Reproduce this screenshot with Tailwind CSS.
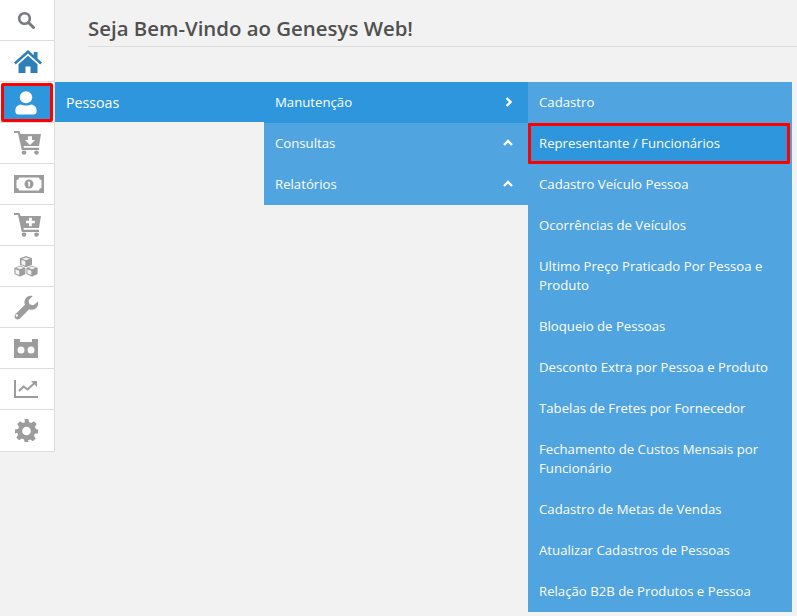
<!DOCTYPE html>
<html lang="en">
<head>
<meta charset="UTF-8">
<title>Genesys Web</title>
<script src="https://cdn.jsdelivr.net/npm/@tailwindcss/browser@4"></script>
</head>
<body class="bg-[#f2f2f2] font-['Open_Sans',sans-serif] text-[13.2px] leading-[19px] text-white overflow-hidden h-[616px]">
<div class="flex items-start">
  <!-- Sidebar -->
  <div class="w-[55px] shrink-0 bg-white border-r border-b border-[#dddddd]">
    <div class="h-[41px] border-b border-[#dddddd] flex items-center pl-[17px]">
      <svg class="w-[18px] h-[18px]" viewBox="0 0 18 18" fill="none" stroke="#777b80" stroke-width="2.6"><circle cx="7.5" cy="7.5" r="5.3"/><path d="M11.5 11.5L16.5 16.5" stroke-linecap="round" stroke-width="3"/></svg>
    </div>
    <div class="h-[41px] border-b border-[#dddddd] flex items-center pl-[14px]">
      <svg class="w-[28px] h-[23px]" viewBox="0 0 28 23" fill="#2e7fb8"><path d="M14 0L0 12.500l1.700 1.900L14 3.500l12.300 10.900 1.700-1.900-4.500-4V2h-3.700v3.200z"/><path d="M14 5.800L4.500 14.300V23h7v-6.500h5V23h7v-8.700z"/></svg>
    </div>
    <div class="h-[41px] border-b border-[#dddddd] pt-[1px] pl-[1px]">
      <div class="w-[52px] h-[39px] bg-[#2e96dc] border-[3px] border-[#ff0000] rounded-[2px] flex items-center pl-[11px]">
        <svg class="w-[22px] h-[24px]" viewBox="0 0 23 26" preserveAspectRatio="none" fill="#ffffff"><circle cx="11.5" cy="6.8" r="6.5"/><path d="M6 14.500c3 1.600 8 1.600 11 0 3.400.4 5.600 3 5.600 6.500v1.500c0 1.700-1.300 3-3 3H3.400c-1.700 0-3-1.300-3-3V21c0-3.500 2.200-6.100 5.600-6.500z"/></svg>
      </div>
    </div>
    <div class="h-[41px] border-b border-[#dddddd] flex items-center pl-[14px]">
      <svg class="w-[27px] h-[24px]" viewBox="0 0 27 25" preserveAspectRatio="none"><path fill="#9c9c9c" fill-rule="evenodd" d="M0 0h5.500l1 3H27l-2 12.500H9.500l.4 2H25v2.300H7.800L4 2.200H0zM14 5.500v4h-3l5 5 5-5h-3v-4z"/><circle cx="10" cy="22.500" r="2.300" fill="#9c9c9c"/><circle cx="22.500" cy="22.500" r="2.300" fill="#9c9c9c"/></svg>
    </div>
    <div class="h-[41px] border-b border-[#dddddd] flex items-center pl-[14px]">
      <svg class="w-[30px] h-[18px]" viewBox="0 0 30 18"><path fill="#9c9c9c" fill-rule="evenodd" d="M0 0h30v18H0zM5 2.500C5 4 4 5 2.500 5v8C4 13 5 14 5 15.500h20c0-1.500 1-2.500 2.500-2.500V5C26 5 25 4 25 2.500z"/><circle cx="15" cy="9" r="4.500" fill="#9c9c9c"/><path fill="#fff" d="M14 6.800h2v4.600h-1.600V8.300H14z"/></svg>
    </div>
    <div class="h-[41px] border-b border-[#dddddd] flex items-center pl-[14px]">
      <svg class="w-[27px] h-[24px]" viewBox="0 0 27 25" preserveAspectRatio="none"><path fill="#9c9c9c" fill-rule="evenodd" d="M0 0h5.500l1 3H27l-2 12.500H9.500l.4 2H25v2.300H7.800L4 2.200H0zM15 5v3h-3v2.800h3v3h2.800v-3h3V8h-3V5z"/><circle cx="10" cy="22.500" r="2.300" fill="#9c9c9c"/><circle cx="22.500" cy="22.500" r="2.300" fill="#9c9c9c"/></svg>
    </div>
    <div class="h-[41px] border-b border-[#dddddd] flex items-center pl-[14px]">
      <svg class="w-[24px] h-[21px]" viewBox="0 0 24 22" preserveAspectRatio="none"><path fill="#9c9c9c" d="M12 0l6 2.300v7L12 12 6 9.300v-7z"/><path fill="#f4f4f4" d="M12 1.500l3.800 1.400L12 4.400 8.200 2.900zM7.500 4l3.800 1.500v4.800L7.500 8.600z"/><path fill="#9c9c9c" stroke="#fff" stroke-width=".8" d="M6 9.700l6 2.500v7L6 22l-6-2.800v-7z"/><path fill="#9c9c9c" stroke="#fff" stroke-width=".8" d="M18 9.700l6 2.500v7L18 22l-6-2.800v-7z"/><path fill="#f4f4f4" d="M6 11l3.800 1.400L6 13.900l-3.800-1.500zM18 11l3.800 1.400L18 13.900l-3.800-1.500zM1.500 14l3.800 1.500v4.500l-3.800-1.700zM13.500 14l3.800 1.500v4.500l-3.800-1.700z"/></svg>
    </div>
    <div class="h-[41px] border-b border-[#dddddd] flex items-center pl-[14px]">
      <svg class="w-[25px] h-[25px]" viewBox="0 0 25 25"><path fill="#9c9c9c" fill-rule="evenodd" d="M24 6.500c.8 3-.4 6-3 7.500-1.800 1-3.900 1.100-5.800.3L6 23.500c-1.400 1.300-3.400 1.200-4.600 0-1.200-1.300-1.100-3.200.2-4.500l9.300-9.200c-.7-1.900-.6-4 .4-5.800C12.800 1.400 15.800.2 18.800 1l-4.300 4.300.9 4 4 .9zM4 20.500a1.200 1.200 0 1 0 0 .1z"/></svg>
    </div>
    <div class="h-[41px] border-b border-[#dddddd] flex items-center pl-[14px]">
      <svg class="w-[24px] h-[19px]" viewBox="0 0 24 19"><path fill="#9c9c9c" fill-rule="evenodd" d="M0 0h6v3h12V0h6v19H0zM7 7.500a3.500 3.500 0 1 0 0 7 3.500 3.500 0 0 0 0-7zm10 0a3.500 3.500 0 1 0 0 7 3.500 3.500 0 0 0 0-7z"/></svg>
    </div>
    <div class="h-[41px] border-b border-[#dddddd] flex items-center pl-[14px]">
      <svg class="w-[24px] h-[18px]" viewBox="0 0 24 18"><path fill="#9c9c9c" d="M0 0h2v16h22v2H0z"/><path fill="none" stroke="#9c9c9c" stroke-width="2" d="M5 11l4.500-4.500 4 3L20 3.500"/><path fill="#9c9c9c" d="M17 1h6v6z"/></svg>
    </div>
    <div class="h-[41px] flex items-center pl-[15px]">
      <svg class="w-[23px] h-[24px]" viewBox="0 0 24 24"><path fill="#9c9c9c" fill-rule="evenodd" d="M10 0h4l.7 3.300 2.200.9 2.800-1.800 2.900 2.900-1.800 2.800.9 2.200L24 11v4l-3.300.2-.9 2.200 1.800 2.800-2.900 2.900-2.800-1.800-2.200.9L14 24h-4l-.7-2.800-2.200-.9-2.800 1.800-2.900-2.900 1.800-2.800-.9-2.200L0 15v-4l3.300-.7.900-2.200L2.400 5.300l2.900-2.900 2.800 1.800 2.200-.9zM12 8a4.500 4.500 0 1 0 0 9 4.500 4.500 0 0 0 0-9z" transform="translate(0 -.5)"/></svg>
    </div>
  </div>

  <!-- Main -->
  <div class="flex-1 min-w-0">
    <div class="h-[82px] pl-[33px]">
      <h1 class="h-[47px] pt-[14px] border-b border-[#dddddd] text-[20.4px] leading-[28px] font-semibold text-[#505050]">Seja Bem-Vindo ao Genesys Web!</h1>
    </div>
    <div class="flex items-start">
      <div class="w-[209px] shrink-0 bg-[#2e96dc]">
        <div class="h-[40px] pl-[11px] flex items-center text-[14.2px]">Pessoas</div>
      </div>
      <div class="w-[264px] shrink-0 bg-[#50a4e0]">
        <div class="h-[41px] px-[11px] pb-[1px] flex items-center justify-between bg-[#2e96dc]">
          <span>Manutenção</span>
          <svg class="w-[9px] h-[10px] mr-[4px]" viewBox="0 0 9 10" fill="none" stroke="#fff" stroke-width="2.400"><path d="M2.500 1l4 4-4 4"/></svg>
        </div>
        <div class="h-[41px] px-[11px] pb-[1px] flex items-center justify-between">
          <span>Consultas</span>
          <svg class="w-[10px] h-[8px] mr-[4px]" viewBox="0 0 10 8" fill="none" stroke="#fff" stroke-width="2.400"><path d="M1 6l4-4 4 4"/></svg>
        </div>
        <div class="h-[41px] px-[11px] pb-[1px] flex items-center justify-between">
          <span>Relatórios</span>
          <svg class="w-[10px] h-[8px] mr-[4px]" viewBox="0 0 10 8" fill="none" stroke="#fff" stroke-width="2.400"><path d="M1 6l4-4 4 4"/></svg>
        </div>
      </div>
      <div class="w-[264px] shrink-0 bg-[#50a4e0]">
        <div class="px-[11px] pt-[10.5px] pb-[11.5px]">Cadastro</div>
        <div class="px-[11px] pt-[10.5px] pb-[11.5px] relative">
          <div class="absolute inset-y-0 left-0 right-[2px] bg-[#2e96dc] border-[3px] border-[#ff0000] rounded-[1px]"></div>
          <span class="relative">Representante / Funcionários</span>
        </div>
        <div class="px-[11px] pt-[10.5px] pb-[11.5px]">Cadastro Veículo Pessoa</div>
        <div class="px-[11px] pt-[10.5px] pb-[11.5px]">Ocorrências de Veículos</div>
        <div class="px-[11px] pt-[10.5px] pb-[11.5px]">Ultimo Preço Praticado Por Pessoa e Produto</div>
        <div class="px-[11px] pt-[10.5px] pb-[11.5px]">Bloqueio de Pessoas</div>
        <div class="px-[11px] pt-[10.5px] pb-[11.5px]">Desconto Extra por Pessoa e Produto</div>
        <div class="px-[11px] pt-[10.5px] pb-[11.5px]">Tabelas de Fretes por Fornecedor</div>
        <div class="px-[11px] pt-[10.5px] pb-[11.5px]">Fechamento de Custos Mensais por Funcionário</div>
        <div class="px-[11px] pt-[10.5px] pb-[11.5px]">Cadastro de Metas de Vendas</div>
        <div class="px-[11px] pt-[10.5px] pb-[11.5px]">Atualizar Cadastros de Pessoas</div>
        <div class="px-[11px] pt-[10.5px] pb-[11.5px]">Relação B2B de Produtos e Pessoa</div>
      </div>
    </div>
  </div>
</div>
</body>
</html>
